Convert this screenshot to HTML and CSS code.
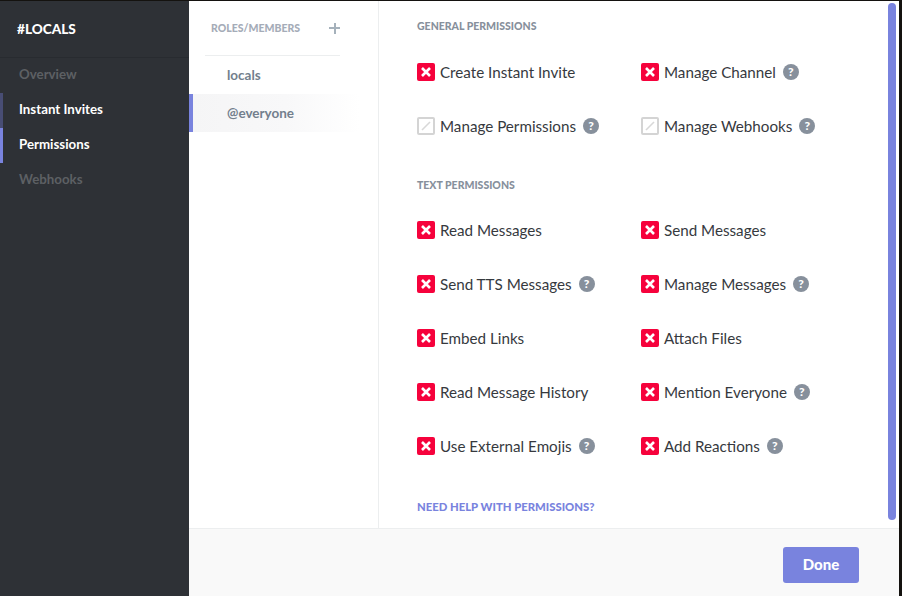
FILE: index.html
```html
<!DOCTYPE html>
<html>
<head>
<title>Channel Settings</title>
<link rel="stylesheet" href="styles.css">
</head>
<body>
<svg class="defs" width="0" height="0">
  <symbol id="cross" viewBox="0 0 18 18">
    <path d="M5 5l8 8M13 5l-8 8" fill="none" stroke="#fff" stroke-width="2.6"/>
  </symbol>
  <symbol id="slash" viewBox="0 0 18 18">
    <path d="M5 13l8-8" fill="none" stroke="#d8d8d8" stroke-width="1.6"/>
  </symbol>
</svg>
<div class="app">
  <div class="sidebar">
    <div class="side-title">#LOCALS</div>
    <div class="side-item muted">Overview</div>
    <div class="side-item fading">Instant Invites</div>
    <div class="side-item selected">Permissions</div>
    <div class="side-item muted">Webhooks</div>
  </div>
  <div class="main">
    <div class="content">
      <div class="roles">
        <div class="roles-head">
          <span>ROLES/MEMBERS</span>
          <span class="plus"></span>
        </div>
        <div class="role">locals</div>
        <div class="role role-on">@everyone</div>
      </div>
      <div class="perms">
        <h3 class="perm-title">GENERAL PERMISSIONS</h3>
        <div class="perm-grid">
          <div class="perm"><span class="box deny"><svg width="18" height="18"><use href="#cross"/></svg></span>Create Instant Invite</div>
          <div class="perm"><span class="box deny"><svg width="18" height="18"><use href="#cross"/></svg></span>Manage Channel<span class="help">?</span></div>
          <div class="perm"><span class="box off"><svg width="18" height="18"><use href="#slash"/></svg></span>Manage Permissions<span class="help">?</span></div>
          <div class="perm"><span class="box off"><svg width="18" height="18"><use href="#slash"/></svg></span>Manage Webhooks<span class="help">?</span></div>
        </div>
        <h3 class="perm-title second">TEXT PERMISSIONS</h3>
        <div class="perm-grid tight">
          <div class="perm"><span class="box deny"><svg width="18" height="18"><use href="#cross"/></svg></span>Read Messages</div>
          <div class="perm"><span class="box deny"><svg width="18" height="18"><use href="#cross"/></svg></span>Send Messages</div>
          <div class="perm"><span class="box deny"><svg width="18" height="18"><use href="#cross"/></svg></span>Send TTS Messages<span class="help">?</span></div>
          <div class="perm"><span class="box deny"><svg width="18" height="18"><use href="#cross"/></svg></span>Manage Messages<span class="help">?</span></div>
          <div class="perm"><span class="box deny"><svg width="18" height="18"><use href="#cross"/></svg></span>Embed Links</div>
          <div class="perm"><span class="box deny"><svg width="18" height="18"><use href="#cross"/></svg></span>Attach Files</div>
          <div class="perm"><span class="box deny"><svg width="18" height="18"><use href="#cross"/></svg></span>Read Message History</div>
          <div class="perm"><span class="box deny"><svg width="18" height="18"><use href="#cross"/></svg></span>Mention Everyone<span class="help">?</span></div>
          <div class="perm"><span class="box deny"><svg width="18" height="18"><use href="#cross"/></svg></span>Use External Emojis<span class="help">?</span></div>
          <div class="perm"><span class="box deny"><svg width="18" height="18"><use href="#cross"/></svg></span>Add Reactions<span class="help">?</span></div>
        </div>
        <div class="help-link">NEED HELP WITH PERMISSIONS?</div>
      </div>
      <div class="scrollbar"></div>
    </div>
    <div class="footer">
      <button class="done">Done</button>
    </div>
  </div>
</div>
</body>
</html>
```

FILE: styles.css
```css
html, body {
  margin: 0;
  padding: 0;
  height: 100%;
  background: #14120f;
  overflow: hidden;
  font-family: Lato, "Open Sans", sans-serif;
}

.defs {
  display: block;
  height: 0;
}

.app {
  display: flex;
  width: 899px;
  height: 595px;
  margin-top: 1px;
  background: #fff;
}

/* left column */
.sidebar {
  width: 189px;
  flex: none;
  background: #2e3136;
  font-size: 13.3px;
  font-weight: 700;
}

.side-title {
  height: 56px;
  line-height: 57px;
  padding-left: 17px;
  color: #fff;
  font-size: 13.6px;
  font-weight: 900;
  border-bottom: 1px solid #282b30;
}

.side-item {
  height: 35px;
  line-height: 33px;
  padding-left: 16px;
  border-left: 3px solid transparent;
  color: #fff;
}

.side-item.muted {
  color: #5d6064;
}

.side-item.fading {
  border-left-color: #484d74;
}

.side-item.selected {
  border-left-color: #7983de;
}

.main {
  flex: 1;
  display: flex;
  flex-direction: column;
  min-width: 0;
}

.content {
  flex: 1;
  display: flex;
  min-height: 0;
}

/* roles column */
.roles {
  width: 189px;
  flex: none;
  border-right: 1px solid #eceeef;
}

.roles-head {
  display: flex;
  justify-content: space-between;
  align-items: center;
  height: 54px;
  margin: 0 38px 0 16px;
  padding-left: 6px;
  color: #a5acb8;
  font-size: 10.5px;
  font-weight: 900;
  border-bottom: 1px solid #eceeef;
}

.plus {
  width: 11px;
  height: 11px;
  background:
    linear-gradient(#a5b1bb, #a5b1bb) center / 11px 2px no-repeat,
    linear-gradient(#a5b1bb, #a5b1bb) center / 2px 11px no-repeat;
}

.role {
  height: 38px;
  line-height: 38px;
  padding-left: 38px;
  color: #737f8d;
  font-size: 13.5px;
  font-weight: 700;
}

.role-on {
  border-left: 4px solid #7983de;
  padding-left: 34px;
  background: linear-gradient(to right, #f5f5f6, #f8f8f9 50%, #fff 90%);
}

/* permissions */
.perms {
  flex: 1;
  padding: 19px 0 0 38px;
}

.perm-title {
  margin: 0;
  height: 14px;
  line-height: 12px;
  color: #87909c;
  font-size: 10.5px;
  font-weight: 900;
}

.perm-title.second {
  margin-top: 26px;
}

.perm-grid {
  display: grid;
  grid-template-columns: 224px 224px;
  grid-auto-rows: 54px;
  margin-top: 11px;
}

.perm-grid.tight {
  margin-top: 10px;
}

.perm {
  display: flex;
  align-items: center;
  color: #36393e;
  font-size: 15.2px;
}

.box {
  display: block;
  width: 18px;
  height: 18px;
  margin-right: 5px;
  border-radius: 2px;
  flex: none;
}

.box svg {
  display: block;
}

.box.deny {
  background: #f6023c;
}

.box.off {
  box-shadow: inset 0 0 0 2px #d4d4d4;
}

.help {
  width: 16px;
  height: 16px;
  margin-left: 7px;
  border-radius: 50%;
  background: #87909c;
  color: #fff;
  font-size: 12px;
  font-weight: 900;
  line-height: 16px;
  text-align: center;
}

.help-link {
  margin-top: 27px;
  color: #7983de;
  font-size: 11.3px;
  font-weight: 900;
}

.scrollbar {
  width: 8px;
  height: 517px;
  margin: 2px 3px 0 0;
  flex: none;
  border-radius: 4px;
  background: #7983de;
}

/* bottom bar */
.footer {
  height: 68px;
  flex: none;
  display: flex;
  justify-content: flex-end;
  align-items: flex-start;
  padding: 18px 40px 0 0;
  box-sizing: border-box;
  background: #f9f9f9;
  border-top: 1px solid #eceeef;
}

.done {
  width: 76px;
  height: 36px;
  padding: 0 0 2px;
  border: 0;
  border-radius: 3px;
  background: #7983de;
  color: #fff;
  font-family: inherit;
  font-size: 15px;
  font-weight: 900;
}
```
